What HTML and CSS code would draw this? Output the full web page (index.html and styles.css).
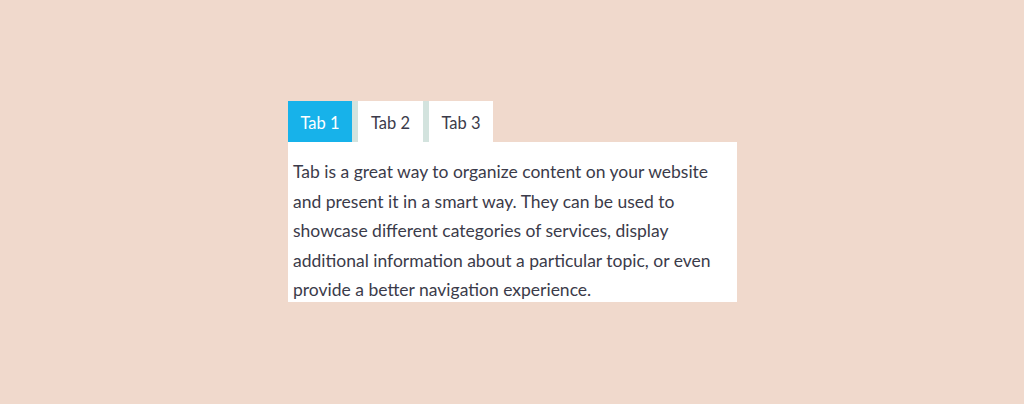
FILE: index.html
```html
<!DOCTYPE html>
<html lang="en">
<head>
<meta charset="utf-8">
<title>Tabs</title>
<link rel="stylesheet" href="styles.css">
</head>
<body>
<div class="stage">
  <div class="tabs">
    <div class="tab-list">
      <button class="tab tab-active">Tab 1</button>
      <button class="tab">Tab 2</button>
      <button class="tab">Tab 3</button>
    </div>
    <div class="tab-panel">
      <p class="tab-text">Tab is a great way to organize content on your website and present it in a smart way. They can be used to showcase different categories of services, display additional information about a particular topic, or even provide a better navigation experience.</p>
    </div>
  </div>
</div>
</body>
</html>
```

FILE: styles.css
```css
html, body {
  margin: 0;
  padding: 0;
}

body {
  background: #f0d9cc;
  font-family: "Lato", "Open Sans", sans-serif;
  color: #3b3b4a;
}

.stage {
  width: 1024px;
  height: 404px;
  padding-top: 101px;
  padding-left: 288px;
  box-sizing: border-box;
}

.tabs {
  width: 449px;
}

.tab-list {
  display: flex;
}

.tab {
  height: 41px;
  padding: 3px 0 0 0;
  width: 64px;
  border: 0;
  background: #ffffff;
  color: #3b3b4a;
  font-family: inherit;
  font-size: 16.5px;
  cursor: pointer;
}

.tab + .tab {
  border-left: 6px solid #d3e3de;
  width: 71px;
}

.tab:last-child {
  width: 70px;
}

.tab-active {
  background: #17b2ea;
  color: #ffffff;
}

.tab-panel {
  background: #ffffff;
  padding: 15px 5px 0 5px;
  height: 160px;
  box-sizing: border-box;
}

.tab-text {
  margin: 0;
  font-size: 17.5px;
  line-height: 29.5px;
}
```
